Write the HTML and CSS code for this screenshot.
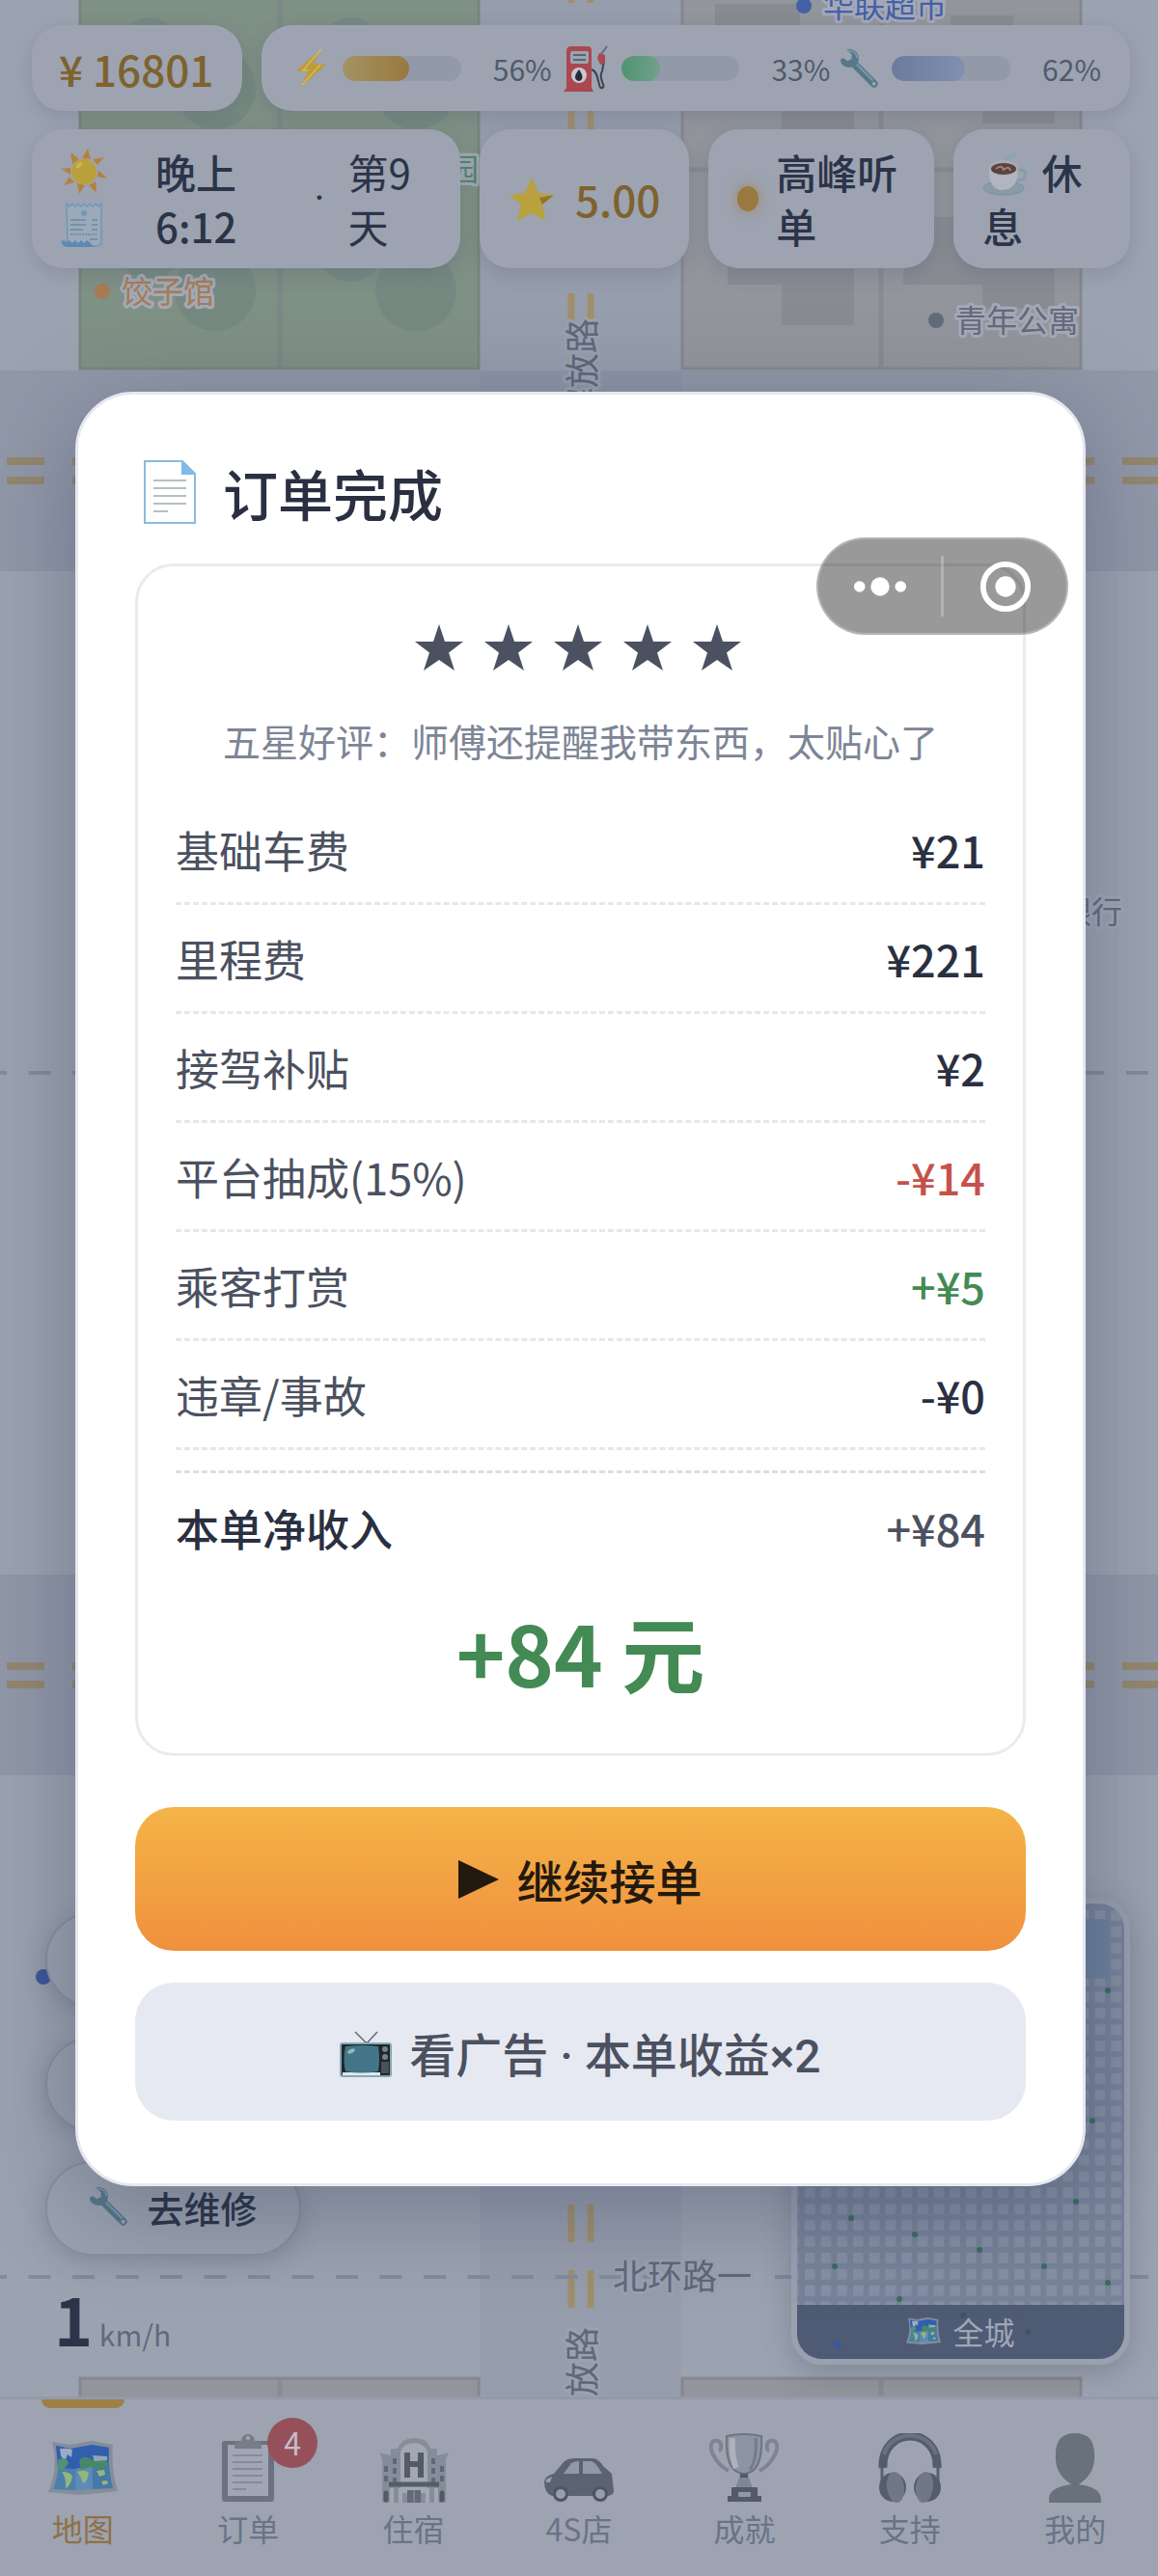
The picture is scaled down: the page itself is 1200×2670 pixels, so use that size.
FILE: index.html
```
<!DOCTYPE html>
<html lang="zh-CN">
<head>
    <meta charset="UTF-8">
    <meta name="viewport" content="width=device-width, initial-scale=1.0">
    <title>订单完成</title>
    <link rel="stylesheet" href="styles.css">
</head>
<body>
    <!-- Shared icons -->
    <svg class="sprite" aria-hidden="true">
        <symbol id="icon-wrench" viewBox="0 0 40 40">
            <path d="M14 15 L34 35" stroke="#587789" stroke-width="7.5" stroke-linecap="round"/>
            <path d="M16 15 L33 32" stroke="#7a98a8" stroke-width="2"/>
            <path d="M7 1.5 C12 -.5 19 3 19 10 C19 15 15 19 10 19 C5 19 1 16 .8 11.500 L3.500 9.500 L8 12.500 L12 10.500 L12 6 Z" fill="#587789"/>
            <path d="M8 2.500 C13 2 17.500 5 17.500 10" fill="none" stroke="#7a98a8" stroke-width="1.600"/>
            <circle cx="34" cy="35" r="1.800" fill="#9da5b1"/>
        </symbol>
        <symbol id="icon-map" viewBox="0 0 72 56">
            <path d="M4 1 L22 4 L45 0 L67 4 Q65 30 72 52 L54 54 L33 56 L0 53 Q11 28 4 1 Z" fill="#858d9c"/>
            <path d="M8 5 L23 8 L29 7 Q33 30 28 51 L5 50 Q14 27 8 5 Z" fill="#4a80ab"/>
            <path d="M29 7 L45 4 Q47 28 46 50 L28 51 Z" fill="#5b8bb6"/>
            <path d="M45 4 L63 7 Q62 30 67 49 L46 50 Z" fill="#4579a6"/>
            <path d="M8 5 L23 8 L45 4 L63 7 L62 22 Q45 24 28 29 L10 28 Z" fill="#315fae"/>
            <path d="M12 8 Q20 7 25 9 L24 17 L20 14 L17 22 L13 15 Z" fill="#9dabc0"/>
            <path d="M10 20 Q18 15 21 23 L16 30 L10 29 Z" fill="#4f9172"/>
            <path d="M14 32 Q23 32 25 37 Q23 47 18 49 Q19 38 14 32 Z" fill="#94b57c"/>
            <path d="M32 20 Q38 14 44 19 L60 18 Q63 25 57 29 L44 27 L34 30 Z" fill="#458967"/>
            <path d="M46 15 L61 16 L61 20 L48 21 Z" fill="#93a5ba"/>
            <path d="M30 32 Q38 29 42 33 Q40 44 36 44 Q34 37 30 32 Z" fill="#94b57c"/>
            <path d="M50 31 L58 30 L59 35 L53 37 Z M55 42 Q62 39 62 44 L57 46 Z" fill="#94b57c"/>
        </symbol>
        <symbol id="icon-star" viewBox="0 0 50 48">
            <path d="M25 0 L31 18 L50 18 L35 29.500 L41 48 L25 37 L9 48 L15 29.500 L0 18 L19 18 Z" fill="currentColor"/>
        </symbol>
    </svg>

    <div class="app">
        <!-- City map -->
        <svg class="map" viewBox="0 0 1200 2670" preserveAspectRatio="xMidYMid slice">
            <rect width="1200" height="2670" fill="#9ca3b0"/>
            <rect y="384" width="1200" height="208" fill="#9198a8"/>
            <rect y="1632" width="1200" height="208" fill="#9198a8"/>
            <rect x="497" width="209" height="2670" fill="#969dac"/>
            <rect x="497" y="384" width="209" height="208" fill="#8e95a6"/>

            <g fill="#7f9085" stroke="#78867f" stroke-width="3">
                <rect x="83" y="-20" width="413" height="402"/>
            </g>
            <g fill="#768980">
                <circle cx="155" cy="50" r="32"/>
                <circle cx="363" cy="50" r="32"/>
                <circle cx="223" cy="92" r="42"/>
                <circle cx="431" cy="92" r="42"/>
                <circle cx="155" cy="258" r="32"/>
                <circle cx="363" cy="258" r="34"/>
                <circle cx="223" cy="301" r="42"/>
                <circle cx="431" cy="301" r="42"/>
            </g>
            <path d="M290 0 V382 M83 176 H496" stroke="#7b8985" stroke-width="6"/>

            <g fill="#92959b" stroke="#85888f" stroke-width="3">
                <rect x="707" y="-20" width="413" height="402"/>
                <rect x="83" y="2465" width="413" height="220"/>
                <rect x="707" y="2465" width="413" height="220"/>
            </g>
            <g fill="#888b92">
                <rect x="741" y="4" width="88" height="60"/>
                <rect x="985" y="16" width="65" height="60"/>
                <rect x="810" y="60" width="75" height="74"/>
                <rect x="1018" y="60" width="75" height="68"/>
                <rect x="754" y="225" width="75" height="70"/>
                <rect x="810" y="225" width="75" height="112"/>
                <rect x="936" y="225" width="100" height="70"/>
                <rect x="1018" y="225" width="75" height="95"/>
            </g>
            <path d="M913 0 V382 M707 176 H1120 M290 2465 V2670 M913 2465 V2670" stroke="#888b92" stroke-width="5"/>

            <g stroke="#a08f6c" stroke-width="7" stroke-dasharray="39 29">
                <path d="M592 -36 V380 M612 -36 V380 M592 2285 V2400 M612 2285 V2400"/>
                <path d="M7 478 H1200 M7 498 H1200 M7 1727 H1200 M7 1746 H1200" stroke="#94876f" stroke-width="8"/>
            </g>
            <path d="M-16 1112 H1200 M-16 2360 H1200" stroke="#848b9a" stroke-width="4" stroke-dasharray="23 22.500"/>

            <g class="place">
                <circle cx="106" cy="302" r="8" fill="#a67b54"/>
                <text x="126" y="314" fill="#a67b54">饺子馆</text>
                <circle cx="833" cy="6" r="8" fill="#4460a8"/>
                <text x="853" y="18" fill="#4460a8">华联超市</text>
                <circle cx="970" cy="332" r="8" fill="#636a7b"/>
                <text x="990" y="344" fill="#636a7b">青年公寓</text>
                <text x="464" y="187" fill="#55876b">园</text>
                <text x="1099" y="957" fill="#656d80">银行</text>
                <circle cx="45" cy="2049" r="8" fill="#3d589f"/>
            </g>
            <g class="road-name">
                <text transform="translate(617 402) rotate(-90)" x="-36">解放路</text>
                <text transform="translate(617 2484) rotate(-90)" x="-36">解放路</text>
                <text x="635" y="2373">北环路一</text>
            </g>
        </svg>

        <header class="hud">
            <div class="hud-row">
                <div class="pill money">¥ 16801</div>
                <div class="pill stats">
                    <div class="stat">
                        <svg class="stat-icon" viewBox="0 0 42 42">
                            <path d="M32 1 L6 23 L18 25 L10 41 L37 17 L24 16 Z" fill="#bd9c35"/>
                            <path d="M32 1 L13 23 L19 23 M31 17 L12 38" stroke="#d0b968" stroke-width="1.500" fill="none"/>
                        </svg>
                        <div class="bar"><div class="fill energy" style="width: 56%"></div></div>
                        <span>56%</span>
                    </div>
                    <div class="stat">
                        <svg class="stat-icon fuel-icon" viewBox="0 0 50 48">
                            <path d="M5 44 V6 Q5 1 10 1 H27 Q31 1 31 6 V44 L33 48 H2 Z" fill="#a94850"/>
                            <rect x="9" y="6" width="19" height="13" rx="2" fill="#9ba4af"/>
                            <path d="M12 10 H25 M12 15 H25" stroke="#586574" stroke-width="2"/>
                            <circle cx="18" cy="31" r="8" fill="#c8c9d2"/>
                            <path d="M18 25 Q10 35 18 37 Q25 35 18 25" fill="#252b36"/>
                            <path d="M31 25 C40 28 37 46 42 44 C47 43 37 34 42 27 L44 15" fill="none" stroke="#3b4450" stroke-width="2"/>
                            <path d="M47 1 L41 9" stroke="#626b78" stroke-width="2"/>
                            <path d="M39 8 L45 10 L45 18 L40 20 L37 13 Z" fill="#a94850"/>
                        </svg>
                        <div class="bar"><div class="fill fuel" style="width: 33%"></div></div>
                        <span>33%</span>
                    </div>
                    <div class="stat">
                        <svg class="stat-icon" viewBox="0 0 42 42"><use href="#icon-wrench"/></svg>
                        <div class="bar"><div class="fill repair" style="width: 62%"></div></div>
                        <span>62%</span>
                    </div>
                </div>
            </div>

            <div class="hud-row">
                <div class="pill clock">
                    <div class="clock-icons">
                        <svg viewBox="0 0 48 56">
                            <path d="M28 4 L31 15 L22 14 Z M45 13 L38 21 L33 15 Z M48 35 L38 33 L39 26 Z M37 50 L29 42 L36 38 Z M19 51 L17 40 L25 42 Z M3 42 L9 33 L14 39 Z M0 25 L10 24 L10 31 Z M10 8 L19 15 L12 20 Z" fill="#b6813e"/>
                            <circle cx="24" cy="28" r="13" fill="#baa03a"/>
                            <ellipse cx="19" cy="21" rx="4" ry="2" transform="rotate(-45 19 21)" fill="#c7b55e"/>
                        </svg>
                        <svg viewBox="0 0 48 56">
                            <path d="M6 5 l3 3 3-3 3 3 3-3 3 3 3-3 3 3 3-3 3 3 3-3 3 3 3-3 V44 Q42 49 36 49 H8 Q2 49 1 44 H7 Z" fill="#9ba9b8" stroke="#6d98b9" stroke-width="1.500"/>
                            <path d="M1 44 l5 1 3-2 3 3 3-3 3 3 3-3 3 3 3-3 4 3 Q32 49 36 50 H6 Q1 49 1 44 Z" fill="#5c8ab1"/>
                            <circle cx="24" cy="15" r="3" fill="#699bb2"/>
                            <path d="M10 22 H26 M32 22 H38 M10 27 H26 M32 27 H38 M10 32 H23 M32 32 H38 M30 42 H38" stroke="#678aa0" stroke-width="1.500"/>
                            <path d="M10 37 H38" stroke="#678aa0" stroke-width="1.500" stroke-dasharray="2 1"/>
                        </svg>
                    </div>
                    <strong class="time">晚上 6:12</strong>
                    <span class="sep">·</span>
                    <span class="day">第9天</span>
                </div>
                <div class="pill rating">
                    <svg viewBox="0 0 48 48">
                        <path d="M24 2 L31 18 L47 20 L35 31 L38 47 L24 39 L9 47 L13 31 L1 20 L17 18 Z" fill="#b9a13e"/>
                        <path d="M32 23 L47 20 L35 30 Z" fill="#8e752d"/>
                    </svg>
                    5.00
                </div>
                <div class="pill status"><i class="dot"></i><span>高峰听单</span></div>
                <div class="pill rest">
                    <button type="button">
                        <svg viewBox="0 0 46 46">
                            <path d="M22 12 C20 5 37 8 32 1" fill="none" stroke="#8da6ae" stroke-width="4"/>
                            <ellipse cx="22" cy="38" rx="21" ry="7" fill="#8c99a6" stroke="#7293a0" stroke-width="1"/>
                            <path d="M36 19 Q47 18 44 26 Q42 31 34 30" fill="none" stroke="#829daa" stroke-width="3"/>
                            <path d="M7 17 Q6 40 21 40 Q38 39 37 17 Z" fill="#b0b5c0"/>
                            <ellipse cx="22" cy="17" rx="15" ry="8" fill="#a5abb7"/>
                            <ellipse cx="22" cy="18" rx="13" ry="6" fill="#5b433d"/>
                            <path d="M14 18 Q20 13 22 19 Q28 14 29 20" fill="none" stroke="#9b8178" stroke-width="2"/>
                        </svg>
                        休息
                    </button>
                </div>
            </div>
        </header>

        <main class="controls">
            <div class="side">
                <div class="side-button"></div>
                <div class="side-button"></div>
                <button type="button" class="side-button">
                    <svg viewBox="0 0 42 42"><use href="#icon-wrench"/></svg>
                    去维修
                </button>
                <div class="speed"><strong>1</strong> km/h</div>
            </div>
            <button type="button" class="minimap">
                <svg class="city" viewBox="0 0 339 472" preserveAspectRatio="none">
                    <defs>
                        <pattern id="cells" x="8" y="7" width="16.700" height="16.900" patternUnits="userSpaceOnUse">
                            <rect width="10.500" height="10.800" fill="#8690a3"/>
                        </pattern>
                    </defs>
                    <rect width="339" height="472" fill="#78829a"/>
                    <rect width="339" height="472" fill="url(#cells)"/>
                    <rect x="250" y="16" width="73" height="62" fill="#6d82a0"/>
                    <g fill="#3b6c5c">
                        <circle cx="322" cy="90" r="3"/>
                        <circle cx="306" cy="225" r="3"/>
                        <circle cx="289" cy="309" r="3"/>
                        <circle cx="56" cy="326" r="3"/>
                        <circle cx="122" cy="343" r="3"/>
                        <circle cx="189" cy="359" r="3"/>
                        <circle cx="39" cy="376" r="3"/>
                        <circle cx="256" cy="376" r="3"/>
                        <circle cx="322" cy="393" r="3"/>
                        <circle cx="106" cy="410" r="3"/>
                    </g>
                    <rect y="416" width="339" height="56" fill="#4f5a75"/>
                    <g fill="#3d5667">
                        <circle cx="172" cy="427" r="3"/>
                        <circle cx="239" cy="444" r="3"/>
                        <circle cx="42" cy="458" r="4" fill="#3c579d"/>
                    </g>
                </svg>
                <span class="minimap-label"><svg viewBox="0 0 72 56"><use href="#icon-map"/></svg>全城</span>
            </button>
        </main>

        <nav class="tabs">
            <a href="#map" class="tab active">
                <svg viewBox="0 0 72 72"><use href="#icon-map" y="8" width="72" height="56"/></svg>
                地图
            </a>
            <a href="#orders" class="tab">
                <svg viewBox="0 0 72 72">
                    <rect x="9" y="8" width="54" height="63" rx="3" fill="#6b717e"/>
                    <rect x="15" y="12" width="42" height="53" fill="#a0a6b3"/>
                    <path d="M22 16 V11 Q22 8 29 8 Q30 1 36 1 Q42 1 43 8 Q50 8 50 11 V16 Z" fill="#767d89"/>
                    <circle cx="36" cy="5" r="2" fill="#a0a6b3"/>
                    <path d="M20 23 H51 M20 30 H51 M20 37 H51 M20 44 H51 M20 51 H51 M20 58 H34" stroke="#848b98" stroke-width="2"/>
                </svg>
                订单
                <span class="badge">4</span>
            </a>
            <a href="#hotel" class="tab">
                <svg viewBox="0 0 72 72">
                    <path d="M3 72 V27 L0 20 L12 23 V16 H19 Q23 5 36 5 Q50 5 53 16 H60 V23 L72 20 L69 27 V72 Z" fill="#868d9a"/>
                    <path d="M22 62 V20 Q25 10 36 10 Q47 10 50 20 V62 Z" fill="#a2a8b3"/>
                    <path d="M29 20 V46 M43 20 V46 M29 32 H43" stroke="#535b69" stroke-width="6"/>
                    <path d="M10 53 H62" stroke="#555d6a" stroke-width="5"/>
                    <path d="M16 26 V32 M16 36 V42 M7 34 V40 M7 44 V50 M16 46 V51 M56 26 V32 M56 36 V42 M65 34 V40 M65 44 V50 M56 46 V51" stroke="#606875" stroke-width="4"/>
                    <path d="M13 57 V72 M22 57 V72 M50 57 V72 M59 57 V72" stroke="#a2a8b3" stroke-width="4"/>
                    <path d="M29 59 H43 V72 H29 Z" fill="#626a77"/>
                    <path d="M36 59 V72" stroke="#9298a5"/>
                    <path d="M7 62 V69 M65 62 V69" stroke="#505966" stroke-width="5" stroke-linecap="round"/>
                </svg>
                住宿
            </a>
            <a href="#shop" class="tab">
                <svg viewBox="0 0 72 72">
                    <path d="M0 50 Q1 44 10 42 L20 30 Q24 26 32 26 H50 Q56 26 61 34 L70 42 L72 60 Q72 64 66 65 H8 Q0 62 0 50 Z" fill="#5b6270"/>
                    <path d="M20 42 L28 31 Q31 29 36 29 V42 Z M40 29 H48 Q53 29 60 42 H40 Z" fill="#9299a6"/>
                    <path d="M2 48 L8 45 L6 51 L2 51 Z" fill="#9aa1ae"/>
                    <circle cx="17" cy="63" r="8" fill="#4e5562"/>
                    <circle cx="17" cy="63" r="5" fill="#969dab"/>
                    <circle cx="58" cy="63" r="8" fill="#4e5562"/>
                    <circle cx="58" cy="63" r="5" fill="#969dab"/>
                </svg>
                4S店
            </a>
            <a href="#awards" class="tab">
                <svg viewBox="0 0 72 72">
                    <path d="M20 39 C5 31 -3 12 5 8 C13 5 14 17 10 18 M52 39 C67 31 75 12 67 8 C59 5 58 17 62 18" fill="none" stroke="#7c8391" stroke-width="4"/>
                    <path d="M18 3 Q36 -1 54 3 Q56 41 36 42 Q16 41 18 3 Z" fill="#8e95a2" stroke="#6d7482" stroke-width="2"/>
                    <path d="M24 5 Q23 25 28 36" stroke="#adb2bc" stroke-width="6" fill="none"/>
                    <path d="M48 5 Q50 26 42 38" stroke="#747b89" stroke-width="3" fill="none"/>
                    <path d="M32 43 H40 L45 57 H27 Z" fill="#7f8694"/>
                    <path d="M32 42 H40 V46 H32 Z M23 56 H50 V65 H54 V71 H19 V65 H23 Z" fill="#535b69"/>
                    <rect x="30" y="61" width="13" height="5" rx="1" fill="#9299a6"/>
                </svg>
                成就
            </a>
            <a href="#support" class="tab">
                <svg viewBox="0 0 72 72">
                    <path d="M8 36 C6 -8 66 -8 64 36" fill="none" stroke="#555d6a" stroke-width="9"/>
                    <path d="M9 22 C17 -4 55 -4 63 22" fill="none" stroke="#6b727f" stroke-width="4"/>
                    <path d="M7 36 V52 M65 36 V52" stroke="#596170" stroke-width="3"/>
                    <ellipse cx="18" cy="56" rx="14" ry="15" fill="#555d6a"/>
                    <ellipse cx="54" cy="56" rx="14" ry="15" fill="#555d6a"/>
                    <ellipse cx="21" cy="56" rx="9" ry="16" transform="rotate(-7 21 56)" fill="#717885"/>
                    <ellipse cx="51" cy="56" rx="9" ry="16" transform="rotate(7 51 56)" fill="#717885"/>
                </svg>
                支持
            </a>
            <a href="#me" class="tab">
                <svg viewBox="0 0 72 72">
                    <path d="M36 0 C50 0 56 8 56 21 C57 36 52 45 40 53 C52 55 63 58 63 69 V72 H9 V69 C9 58 20 55 32 53 C20 45 15 36 16 21 C16 8 22 0 36 0 Z" fill="#69717d"/>
                </svg>
                我的
            </a>
        </nav>

        <!-- Order result -->
        <div class="overlay">
            <section class="modal" role="dialog" aria-labelledby="modalTitle">
                <h2 id="modalTitle">
                    <svg viewBox="0 0 54 66">
                        <path d="M1 1 H40 L53 14 V65 H1 Z" fill="#fff" stroke="#8bbadd" stroke-width="2"/>
                        <path d="M39 0 L54 15 H39 Z" fill="#7fbbe9"/>
                        <path d="M10 21 H44 M10 29 H44 M10 37 H44 M10 45 H44 M10 53 H25" stroke="#b4bfc0" stroke-width="2"/>
                    </svg>
                    订单完成
                </h2>

                <div class="card">
                    <div class="stars">
                        <svg><use href="#icon-star"/></svg>
                        <svg><use href="#icon-star"/></svg>
                        <svg><use href="#icon-star"/></svg>
                        <svg><use href="#icon-star"/></svg>
                        <svg><use href="#icon-star"/></svg>
                    </div>
                    <p class="review">五星好评：师傅还提醒我带东西，太贴心了</p>

                    <table class="fees">
                        <tbody>
                            <tr><th scope="row">基础车费</th><td>¥21</td></tr>
                            <tr><th scope="row">里程费</th><td>¥221</td></tr>
                            <tr><th scope="row">接驾补贴</th><td>¥2</td></tr>
                            <tr><th scope="row">平台抽成(15%)</th><td class="minus">-¥14</td></tr>
                            <tr><th scope="row">乘客打赏</th><td class="plus">+¥5</td></tr>
                            <tr><th scope="row">违章/事故</th><td>-¥0</td></tr>
                            <tr class="total"><th scope="row">本单净收入</th><td>+¥84</td></tr>
                        </tbody>
                    </table>

                    <p class="income">+84 元</p>
                </div>

                <button type="button" class="btn btn-primary">
                    <svg viewBox="0 0 42 42"><path d="M0 1 L42 21 L0 41 Z" fill="currentColor"/></svg>
                    继续接单
                </button>
                <button type="button" class="btn btn-secondary">
                    <svg viewBox="0 -4 54 54">
                        <path d="M16 2 L28 14 L39 2" fill="none" stroke="#606975" stroke-width="1.500"/>
                        <path d="M20 15 Q28 10 36 15 Z" fill="#4b6270"/>
                        <rect x="1" y="14" width="52" height="34" rx="2" fill="#20262b" stroke="#86a9b4" stroke-width="2"/>
                        <path d="M3 44 H42 V47 H3 Z" fill="#dfe9ec"/>
                        <path d="M6 17 Q23 15 40 17 Q42 30 40 43 Q23 46 6 43 Q3 30 6 17 Z" fill="#427587"/>
                        <ellipse cx="12" cy="22" rx="4" ry="2" transform="rotate(-25 12 22)" fill="#9ab8bb"/>
                        <circle cx="47" cy="20" r="3" fill="#71838b"/>
                        <circle cx="47" cy="28" r="3" fill="#71838b"/>
                        <rect x="43" y="33" width="8" height="12" fill="#46535b"/>
                    </svg>
                    看广告 · 本单收益×2
                </button>
            </section>
        </div>

        <div class="capsule">
            <button type="button" aria-label="更多">
                <svg viewBox="0 0 60 60"><g fill="#fff"><circle cx="8" cy="30" r="6"/><circle cx="30" cy="30" r="10"/><circle cx="52" cy="30" r="6"/></g></svg>
            </button>
            <button type="button" aria-label="关闭">
                <svg viewBox="0 0 60 60"><circle cx="30" cy="30" r="24" fill="none" stroke="#fff" stroke-width="6"/><circle cx="30" cy="30" r="11" fill="#fff"/></svg>
            </button>
        </div>
    </div>
</body>
</html>
```

FILE: styles.css
```
* {
    box-sizing: border-box;
}
body {
    margin: 0;
    font-family: "Noto Sans CJK SC", "Noto Sans", sans-serif;
    color: #2b3448;
}
button {
    font: inherit;
    color: inherit;
    border: none;
    background: none;
    padding: 0;
    cursor: pointer;
}
svg {
    display: block;
    flex: none;
}
.sprite {
    position: absolute;
    width: 0;
    height: 0;
}
.app {
    position: relative;
    display: flex;
    flex-direction: column;
    min-height: 100vh;
    overflow: hidden;
}

/* Map */
.map {
    position: absolute;
    top: 0;
    left: 0;
    width: 100%;
    height: 100%;
}
.place text,
.road-name text {
    font-size: 32px;
    stroke: #a3a9b6;
    stroke-width: 6px;
    stroke-linejoin: round;
    paint-order: stroke;
}
.road-name text {
    font-size: 36px;
    fill: #5f687a;
    stroke: #9aa1af;
}

/* Top status */
.hud {
    position: relative;
    display: flex;
    flex-direction: column;
    gap: 19px;
    padding: 26px 29px 0 33px;
}
.hud-row {
    display: flex;
    gap: 20px;
}
.pill {
    display: flex;
    align-items: center;
    padding: 16px 30px;
    border-radius: 32px;
    background: #9da3b0;
    box-shadow: 0 6px 20px rgba(60, 70, 100, 0.2);
    font-size: 42px;
    line-height: 56px;
}
.money,
.rating {
    color: #7e622f;
    font-weight: 500;
    font-size: 44px;
    white-space: nowrap;
}
.money {
    flex: 1 1 218px;
    height: 89px;
    padding: 16px 28px;
}
.stats {
    flex: 4 1 900px;
    gap: 10px;
}
.stat {
    display: flex;
    align-items: center;
    flex: 1 1 auto;
    font-size: 30px;
    color: #505a6e;
}
.stat-icon {
    width: 42px;
    height: 42px;
    margin-right: 12px;
}
.fuel-icon {
    width: 50px;
    height: 48px;
}
.stat span {
    width: 94px;
    text-align: right;
}
.bar {
    flex: 1 1 120px;
    height: 26px;
    border-radius: 13px;
    background: #9299a9;
    overflow: hidden;
}
.fill {
    height: 100%;
    border-radius: 13px;
}
.energy {
    background: linear-gradient(to right, #a39363, #99793f);
}
.fuel {
    background: linear-gradient(to right, #4f9470, #73a08c);
}
.repair {
    background: linear-gradient(to right, #6c7b9c, #8190b1);
}
.clock {
    flex: 2 1 444px;
}
.clock-icons svg {
    width: 48px;
    height: 56px;
}
.time {
    width: 88px;
    margin-left: 50px;
    font-weight: 500;
}
.sep {
    margin-left: auto;
    font-family: Roboto, sans-serif;
}
.day {
    width: 86px;
    margin-left: 24px;
}
.rating {
    flex: 1 1 218px;
    justify-content: space-between;
}
.rating svg {
    width: 48px;
    height: 48px;
}
.status {
    flex: 1 1 234px;
    gap: 18px;
    font-weight: 500;
}
.dot {
    flex: none;
    width: 22px;
    height: 26px;
    border-radius: 50%;
    background: #99793f;
    box-shadow: 0 0 14px rgba(160, 125, 60, 0.7);
}
.rest {
    flex: 1 1 183px;
}
.rest button {
    font-weight: 500;
    text-align: left;
}
.rest svg {
    display: inline-block;
    width: 46px;
    height: 46px;
    margin-right: 6px;
    vertical-align: -7px;
}

/* Map controls */
.controls {
    position: relative;
    display: flex;
    justify-content: space-between;
    align-items: flex-end;
    margin-top: auto;
    padding: 0 29px 33px 47px;
}
.side {
    display: flex;
    flex-direction: column;
    gap: 31px;
}
.side-button {
    display: flex;
    align-items: center;
    justify-content: center;
    gap: 18px;
    width: 265px;
    height: 98px;
    padding-bottom: 4px;
    border: 2px solid #8990a0;
    border-radius: 49px;
    background: #9ba2af;
    box-shadow: 0 6px 24px rgba(60, 70, 100, 0.25);
    font-size: 38px;
    font-weight: 500;
}
.side-button svg {
    width: 42px;
    height: 42px;
}
.speed {
    height: 82px;
    padding-left: 9px;
    font-size: 30px;
    line-height: 68px;
    color: #5f6a7e;
}
.speed strong {
    font-size: 68px;
    color: #2b3448;
}
.minimap {
    position: relative;
    width: 351px;
    height: 484px;
    border: 6px solid #99a0ae;
    border-radius: 32px;
    box-shadow: 0 8px 30px rgba(60, 70, 100, 0.3);
    overflow: hidden;
}
.city {
    width: 100%;
    height: 100%;
}
.minimap-label {
    position: absolute;
    left: 0;
    right: 0;
    bottom: 0;
    display: flex;
    align-items: center;
    justify-content: center;
    gap: 12px;
    height: 56px;
    padding-bottom: 2px;
    font-size: 32px;
    color: #9fa7b6;
}
.minimap-label svg {
    width: 36px;
    height: 28px;
}

/* Bottom tabs */
.tabs {
    position: relative;
    display: flex;
    height: 186px;
    border-top: 3px solid #939aaa;
    background: #9da3b0;
}
.tab {
    position: relative;
    flex: 1;
    display: flex;
    flex-direction: column;
    align-items: center;
    gap: 6px;
    padding-top: 35px;
    font-size: 32px;
    line-height: 40px;
    color: #6a7387;
    text-decoration: none;
}
.tab svg {
    width: 72px;
    height: 72px;
}
.active {
    color: #8f7046;
}
.active::before {
    content: "";
    position: absolute;
    top: 0;
    width: 86px;
    height: 9px;
    border-radius: 0 0 9px 9px;
    background: #9e7f45;
}
.badge {
    position: absolute;
    top: 19px;
    left: 50%;
    width: 52px;
    height: 52px;
    margin-left: 20px;
    border-radius: 50%;
    background: #95505a;
    color: #c3bfca;
    line-height: 50px;
    text-align: center;
}

/* Result dialog */
.overlay {
    position: absolute;
    top: 0;
    right: 0;
    bottom: 0;
    left: 0;
    display: flex;
    align-items: center;
    padding: 2px 75px 0 78px;
}
.modal {
    display: flex;
    flex-direction: column;
    width: 100%;
    padding: 66px 59px 65px;
    border: 3px solid #e5e8ee;
    border-radius: 60px;
    background: #fff;
    box-shadow: 0 24px 100px rgba(40, 50, 80, 0.36);
}
.modal h2 {
    display: flex;
    align-items: center;
    gap: 28px;
    margin: 0 0 39px;
    padding-left: 9px;
    font-size: 57px;
    font-weight: 500;
    line-height: 70px;
    color: #2a3041;
}
.modal h2 svg {
    width: 54px;
    height: 66px;
}
.card {
    padding: 60px 39px 55px;
    border: 3px solid #ebebed;
    border-radius: 40px;
}
.stars {
    display: flex;
    justify-content: center;
    gap: 22px;
    padding-right: 6px;
    color: #4b5160;
}
.stars svg {
    width: 50px;
    height: 48px;
}
.review {
    margin: 44px 0 30px;
    font-size: 39px;
    line-height: 56px;
    text-align: center;
    color: #7d8596;
}
.fees,
.fees tbody {
    display: block;
}
.fees tr {
    display: flex;
    justify-content: space-between;
    align-items: center;
    height: 113px;
    border-bottom: 3px dashed #e6e7ea;
    font-size: 45px;
    color: #4b5160;
}
.fees th {
    padding: 0;
    font-weight: 400;
}
.fees td {
    padding: 0;
    font-weight: 500;
    color: #2a3041;
}
.fees .minus {
    color: #c4524b;
}
.fees .plus {
    color: #438a54;
}
.fees .total {
    height: 116px;
    margin-top: 21px;
    border-top: 3px dashed #dcdee3;
    border-bottom: none;
}
.total th {
    font-weight: 500;
    color: #2a3041;
}
.fees .total td {
    color: #4b5160;
}
.income {
    margin: 22px 0 0;
    font-size: 86px;
    font-weight: 700;
    line-height: 100px;
    text-align: center;
    color: #438a54;
}
.btn {
    display: flex;
    align-items: center;
    justify-content: center;
    gap: 18px;
    border-radius: 40px;
    font-family: Roboto, "Noto Sans CJK SC", sans-serif;
    font-size: 48px;
    font-weight: 500;
}
.btn-primary {
    height: 149px;
    margin-top: 53px;
    background: linear-gradient(#f4b447, #f0903e);
    color: #23190f;
}
.btn-primary svg {
    width: 42px;
    height: 42px;
}
.btn-secondary {
    height: 143px;
    margin-top: 33px;
    background: #e6e9f1;
    color: #4b5160;
}
.btn-secondary svg {
    width: 54px;
    height: 54px;
}

/* Floating capsule */
.capsule {
    position: absolute;
    top: 557px;
    right: 93px;
    display: flex;
    width: 261px;
    height: 101px;
    border: 2px solid rgba(255, 255, 255, 0.25);
    border-radius: 51px;
    background: rgba(0, 0, 0, 0.4);
}
.capsule button {
    flex: 1;
    display: flex;
    align-items: center;
    justify-content: center;
    margin: 17px 0;
}
.capsule button + button {
    border-left: 3px solid rgba(255, 255, 255, 0.25);
}
.capsule svg {
    width: 58px;
    height: 58px;
}
```
